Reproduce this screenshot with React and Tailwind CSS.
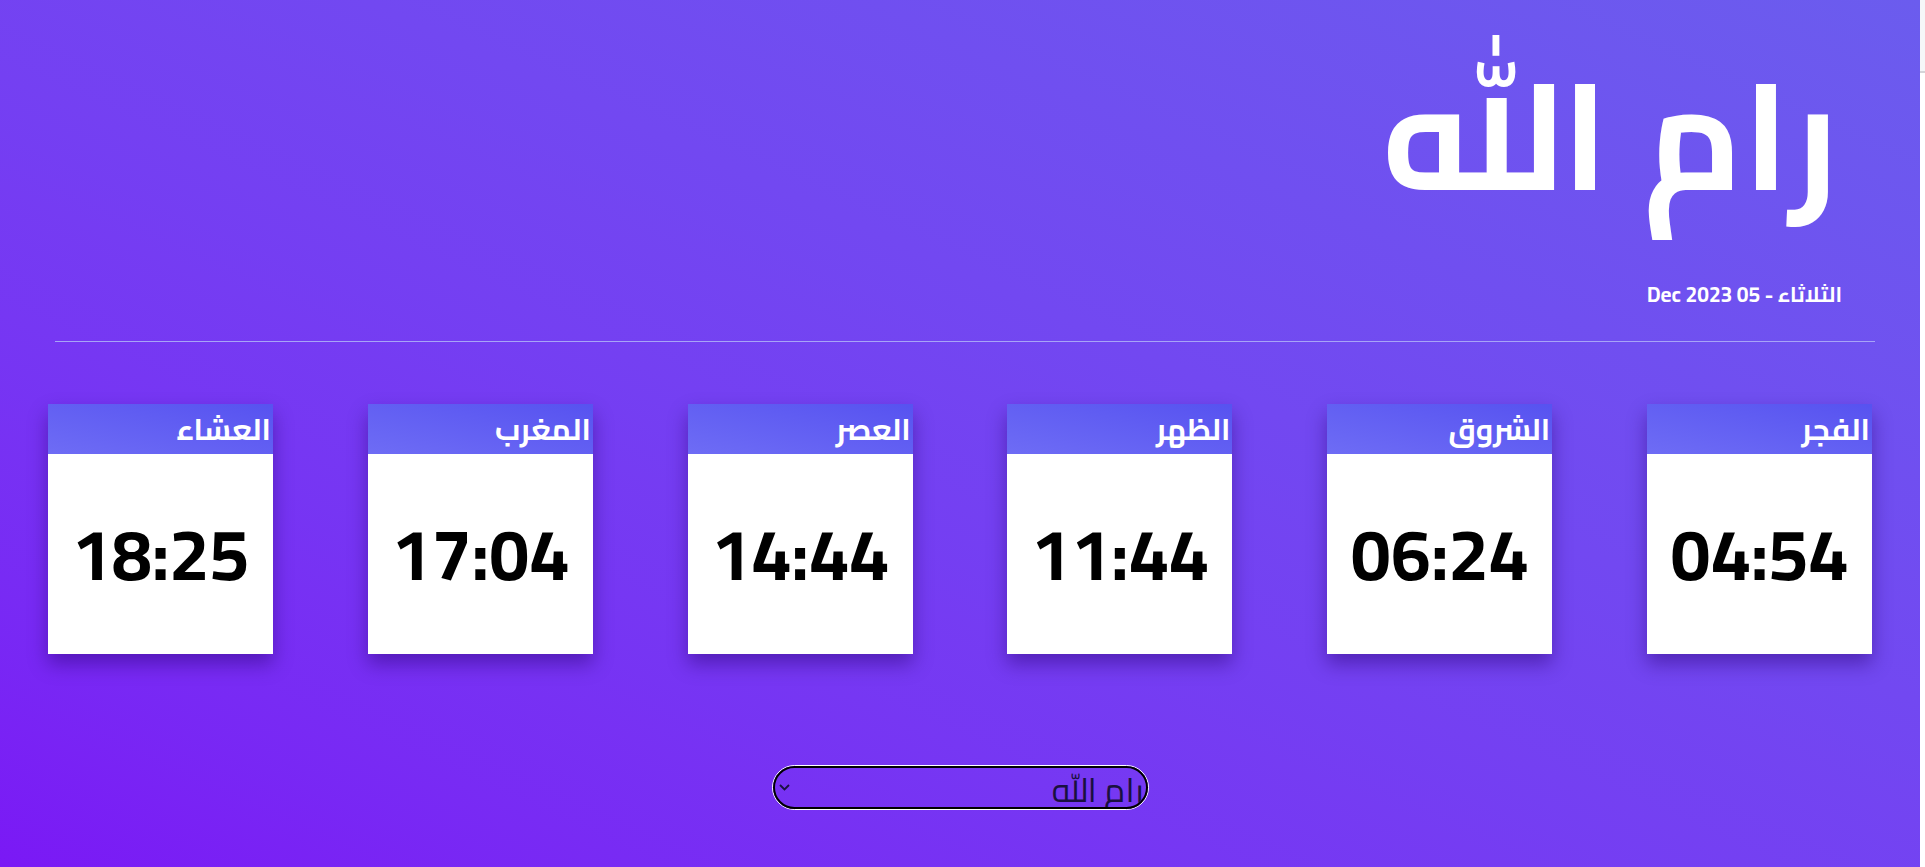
import React from "react";

const prayers = [
  { name: "الفجر", time: "04:54" },
  { name: "الشروق", time: "06:24" },
  { name: "الظهر", time: "11:44" },
  { name: "العصر", time: "14:44" },
  { name: "المغرب", time: "17:04" },
  { name: "العشاء", time: "18:25" },
];

function Card({ name, time }) {
  return (
    <div className="w-[225px] h-[250px] bg-white flex flex-col shadow-[0_10px_18px_rgba(40,0,110,0.45)]">
      <div className="h-[50px] flex items-center justify-start pr-0.5 bg-linear-to-bl from-[#5752f0] to-[#6e6cf5] text-white text-3xl font-bold leading-none">
        {name}
      </div>
      <div className="flex-1 flex items-center justify-center">
        <span dir="ltr" className="text-7xl font-bold text-black leading-none">
          {time}
        </span>
      </div>
    </div>
  );
}

export default function App() {
  return (
    <div className="flex w-[1925px] min-h-[867px] bg-white font-['Cairo',_'Noto_Sans_Arabic',_sans-serif]">
      <div
        dir="rtl"
        className="w-[1920px] min-h-[867px] bg-linear-to-tr from-[#7a18f5] to-[#6b5cee] flex flex-col"
      >
        <h1 className="mt-[61px] pr-[82px] text-white font-bold text-[150px] leading-none">
          رام الله
        </h1>
        <p className="mt-[73px] pr-[78px] text-white font-bold text-[21px] leading-none">
          الثلاثاء - 05 Dec 2023
        </p>
        <div className="ml-[55px] mr-[45px] mt-[36px] h-px bg-[#a7a4f7]" />
        <div className="mt-[62px] px-12 flex justify-between">
          {prayers.map((p) => (
            <Card key={p.name} {...p} />
          ))}
        </div>
        <div className="mt-[111px] flex justify-center">
          <div className="relative w-[377px] h-[45px] rounded-full border border-white">
            <select
              dir="rtl"
              defaultValue="ramallah"
              className="appearance-none w-full h-full rounded-full border-2 border-black bg-transparent text-[34px] leading-none text-[#1a1040] pr-0.5 pl-8 pt-1 outline-none"
            >
              <option value="ramallah">رام الله</option>
              <option value="jerusalem">القدس</option>
              <option value="nablus">نابلس</option>
            </select>
            <svg
              className="absolute left-[6px] top-[18px] pointer-events-none"
              width="11"
              height="7"
              viewBox="0 0 11 7"
              fill="none"
            >
              <path d="M1 1l4.5 4.5L10 1" stroke="#1a1040" strokeWidth="1.8" />
            </svg>
          </div>
        </div>
      </div>
      <div className="w-[5px] flex flex-col">
        <div className="h-[73px] bg-[#f5f6f8] border-b-2 border-[#d4d4d8]" />
        <div className="flex-1 bg-white" />
      </div>
    </div>
  );
}
